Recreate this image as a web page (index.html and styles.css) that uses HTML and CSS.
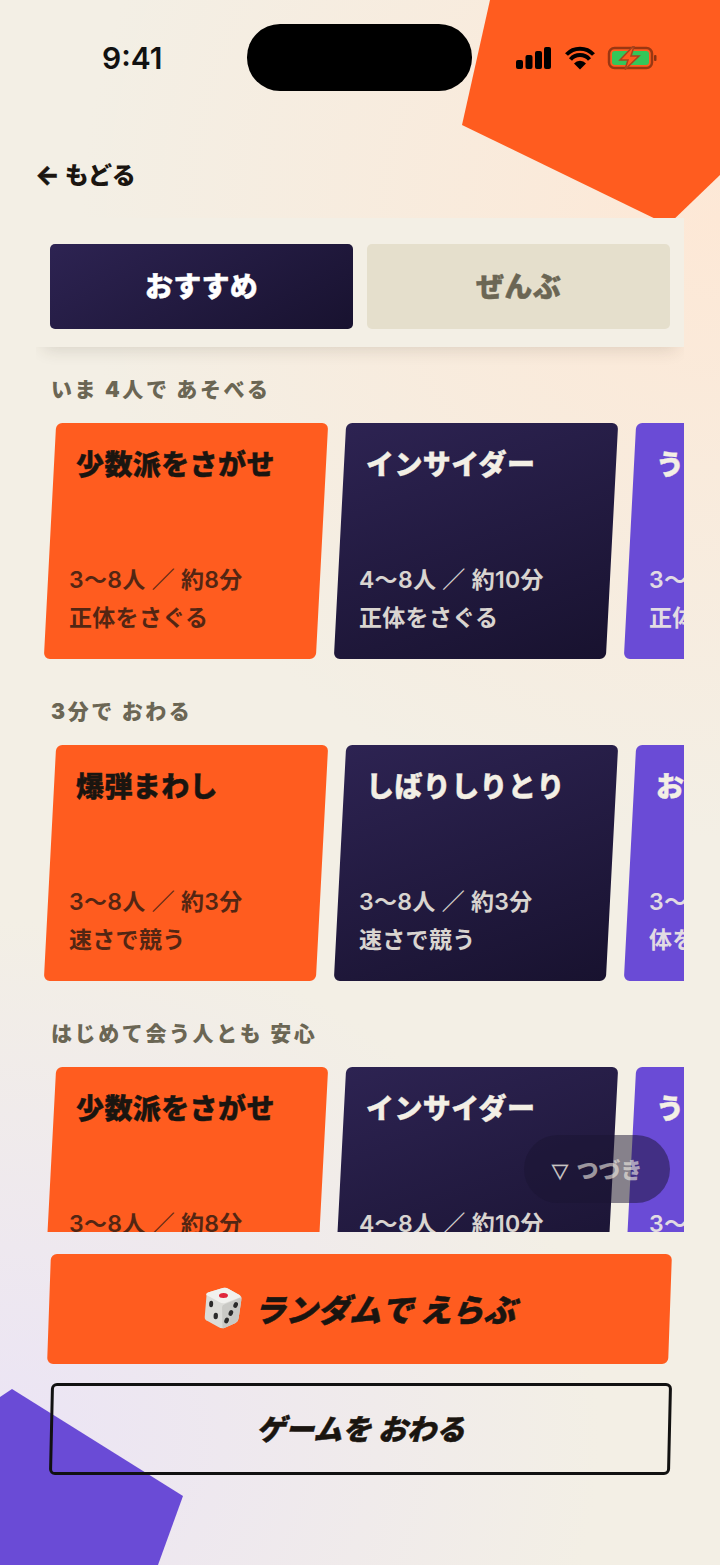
FILE: index.html
```html
<!DOCTYPE html>
<html lang="ja">
<head>
	<meta charset="UTF-8">
	<title>ゲームをえらぶ</title>
	<link rel="stylesheet" href="styles.css">
</head>
<body>
	<div class="screen">
		<div class="shape-orange"></div>
		<div class="shape-purple"></div>

		<div class="status">
			<span class="clock">9:41</span>
			<div class="island"></div>
			<svg class="status-icons" width="142" height="24" viewBox="0 0 142 24">
				<rect x="1" y="14" width="7" height="9" rx="2"/>
				<rect x="10.500" y="9" width="7" height="14" rx="2"/>
				<rect x="20" y="5" width="7" height="18" rx="2"/>
				<rect x="29" y="1" width="7" height="22" rx="2"/>
				<path d="M51.500 8.500a18.500 18.500 0 0 1 27 0M55.500 13.500a12.500 12.500 0 0 1 19 0" fill="none" stroke="#000" stroke-width="4"/>
				<path d="M59 17.500a8 8 0 0 1 12 0L65 23.500z"/>
				<rect x="94" y="2" width="43" height="20" rx="5.500" fill="none" stroke="#000" stroke-opacity=".4" stroke-width="2.500"/>
				<rect x="97" y="5" width="37" height="14" rx="3" fill="#34c759"/>
				<rect x="139" y="9" width="2.500" height="6" rx="1" fill="#000" fill-opacity=".45"/>
				<path d="M118 .5L105 14h8l-3 9.500L124 10h-8l3-9.500z" fill="#ff5c1f" stroke="#a8431c" stroke-width="1.500"/>
			</svg>
		</div>

		<div class="back"><span class="back-arrow">←</span> もどる</div>

		<div class="main">
			<div class="tabs">
				<div class="tab tab-on">おすすめ</div>
				<div class="tab">ぜんぶ</div>
			</div>

			<div class="section">
				<div class="label">いま 4人で あそべる</div>
				<div class="row">
					<div class="card orange">
						<div class="title">少数派をさがせ</div>
						<div class="meta">3〜8人 ／ 約8分<br>正体をさぐる</div>
					</div>
					<div class="card navy">
						<div class="title">インサイダー</div>
						<div class="meta">4〜8人 ／ 約10分<br>正体をさぐる</div>
					</div>
					<div class="card purple">
						<div class="title">うそつき村</div>
						<div class="meta">3〜8人 ／ 約5分<br>正体をさぐる</div>
					</div>
				</div>
			</div>

			<div class="section">
				<div class="label">3分で おわる</div>
				<div class="row">
					<div class="card orange">
						<div class="title">爆弾まわし</div>
						<div class="meta">3〜8人 ／ 約3分<br>速さで競う</div>
					</div>
					<div class="card navy">
						<div class="title">しばりしりとり</div>
						<div class="meta">3〜8人 ／ 約3分<br>速さで競う</div>
					</div>
					<div class="card purple">
						<div class="title">おえかき</div>
						<div class="meta">3〜8人 ／ 約3分<br>体をうごかす</div>
					</div>
				</div>
			</div>

			<div class="section">
				<div class="label">はじめて会う人とも 安心</div>
				<div class="row">
					<div class="card orange">
						<div class="title">少数派をさがせ</div>
						<div class="meta">3〜8人 ／ 約8分<br>正体をさぐる</div>
					</div>
					<div class="card navy">
						<div class="title">インサイダー</div>
						<div class="meta">4〜8人 ／ 約10分<br>正体をさぐる</div>
					</div>
					<div class="card purple">
						<div class="title">うそつき村</div>
						<div class="meta">3〜8人 ／ 約5分<br>正体をさぐる</div>
					</div>
				</div>
			</div>

			<div class="more"><span class="more-mark">▽</span>つづき</div>
		</div>

		<div class="actions">
			<div class="btn btn-main">
				<div class="btn-text">
					<svg class="dice" width="42" height="42" viewBox="0 0 42 42">
						<path d="M5 9Q4 6 8 5L21 1Q24 0 27 2L38 8Q41 10 40 13L38 31Q38 34 35 36L24 41Q21 42 18 40L7 34Q4 33 4 30z" fill="#dcdcd8"/>
						<path d="M5 8Q4 6 8 5L21 1Q24 0 27 2L38 8Q40 10 37 11L24 16Q21 17 18 15z" fill="#f1f1ee"/>
						<path d="M24 17L38 11Q40 11 40 13L38 31Q38 34 35 36L24 41Q22 42 22 39L21 20Q21 18 24 17z" fill="#c9c9c5"/>
						<ellipse cx="22" cy="8.500" rx="4.500" ry="2.500" fill="#e0263c"/>
						<ellipse cx="10" cy="17" rx="2" ry="3.200" fill="#2b2b2b"/>
						<ellipse cx="15" cy="29" rx="2.200" ry="3.200" fill="#2b2b2b"/>
						<ellipse cx="34.500" cy="18" rx="2.200" ry="3" fill="#2b2b2b" transform="rotate(20 34.500 18)"/>
						<ellipse cx="30" cy="26" rx="2.200" ry="3" fill="#2b2b2b" transform="rotate(20 30 26)"/>
						<ellipse cx="26" cy="33.500" rx="2.200" ry="3" fill="#2b2b2b" transform="rotate(20 26 33.500)"/>
					</svg>
					<span class="slant big">ランダムで えらぶ</span>
				</div>
			</div>
			<div class="btn btn-line">
				<span class="slant small">ゲームを おわる</span>
			</div>
		</div>
	</div>
</body>
</html>
```

FILE: styles.css
```css
*{
	margin: 0;
	padding: 0;
	box-sizing: border-box;
}
body{
	width: 720px;
	height: 1565px;
	overflow: hidden;
	font-family: "Noto Sans CJK JP", "Noto Sans", sans-serif;
	color: #1a1510;
}
.screen{
	position: relative;
	width: 720px;
	height: 1565px;
	overflow: hidden;
	background:
		radial-gradient(ellipse 640px 620px at 100% 14%, #fde8d6 0%, rgba(253,232,214,0) 100%),
		radial-gradient(ellipse 600px 520px at 0% 92%, #ebe4f5 0%, rgba(235,228,245,0) 100%),
		#f3efe5;
}

/* background shapes */
.shape-orange{
	position: absolute;
	top: 0;
	right: 0;
	width: 258px;
	height: 240px;
	background: #ff5c1f;
	clip-path: polygon(28px 0, 258px 0, 258px 175px, 206px 225px, 0 125px);
}
.shape-purple{
	position: absolute;
	left: 0;
	bottom: 0;
	width: 183px;
	height: 176px;
	background: #6a4bd6;
	clip-path: polygon(0 8px, 12px 0, 183px 107px, 158px 176px, 0 176px);
}

/* status bar */
.status{
	position: relative;
	height: 116px;
	padding-top: 24px;
	display: flex;
}
.clock{
	width: 247px;
	padding-left: 102px;
	font-family: Inter, sans-serif;
	font-size: 30px;
	font-weight: 600;
	line-height: 68px;
	color: #111;
}
.island{
	width: 225px;
	height: 67px;
	background: #000;
	border-radius: 33px;
}
.status-icons{
	margin: 22px 0 0 43px;
}

.back{
	position: relative;
	height: 102px;
	padding: 41px 0 0 35px;
	font-size: 24px;
	font-weight: 800;
	line-height: 34px;
	letter-spacing: -.3px;
}
.back-arrow{
	font-family: Inter, sans-serif;
	font-size: 26px;
	font-weight: 800;
	line-height: 26px;
	-webkit-text-stroke: .5px currentColor;
}

/* scrolling column */
.main{
	position: relative;
	width: 648px;
	height: 1014px;
	margin-left: 36px;
	overflow: hidden;
}
.tabs{
	position: relative;
	z-index: 2;
	display: flex;
	gap: 14px;
	padding: 26px 14px 18px;
	background: #f3efe5;
	box-shadow: 0 10px 16px -8px rgba(60,50,30,.16);
}
.tab{
	flex: 1;
	height: 85px;
	background: #e5dfcc;
	border-radius: 5px;
	color: #6b6654;
	font-size: 28px;
	font-weight: 900;
	line-height: 83px;
	letter-spacing: .3px;
	text-align: center;
	-webkit-text-stroke: .4px currentColor;
}
.tab-on{
	background: linear-gradient(150deg, #2d2352, #18122f);
	color: #fff;
}

.section{
	padding-top: 28px;
	padding-bottom: 38px;
}
.section + .section{
	padding-top: 0;
}
.label{
	height: 28px;
	margin: 0 0 20px 15px;
	color: #6b6654;
	font-family: Inter, "Noto Sans CJK JP", sans-serif;
	font-size: 21px;
	font-weight: 900;
	line-height: 30px;
	letter-spacing: 2.600px;
}
.row{
	display: flex;
	gap: 18px;
	padding-left: 14px;
	overflow: hidden;
}
.card{
	position: relative;
	flex: none;
	width: 272px;
	height: 236px;
	display: flex;
	flex-direction: column;
	justify-content: space-between;
	padding: 20px 10px 22px 19px;
	white-space: nowrap;
}
.card::before{
	content: "";
	position: absolute;
	top: 0;
	left: 0;
	width: 100%;
	height: 100%;
	border-radius: 6px;
	transform: skewX(-3deg);
}
.orange::before{
	background: #ff5c1f;
}
.navy::before{
	background: linear-gradient(160deg, #2d2352, #18122f);
}
.purple::before{
	background: #6a4bd6;
}
.title{
	position: relative;
	margin-left: 7px;
	font-size: 28px;
	font-weight: 900;
	line-height: 40px;
	letter-spacing: .4px;
	-webkit-text-stroke: .4px currentColor;
}
.meta{
	position: relative;
	font-family: Inter, "Noto Sans CJK JP", sans-serif;
	font-size: 23px;
	font-weight: 600;
	line-height: 38px;
	letter-spacing: .3px;
	opacity: .75;
}
.navy,
.purple{
	color: #f3efe5;
}
.navy .meta,
.purple .meta{
	opacity: .88;
}

.more{
	position: absolute;
	z-index: 3;
	top: 917px;
	right: 14px;
	width: 146px;
	height: 68px;
	background: rgba(26,20,50,.5);
	border-radius: 34px;
	color: rgba(243,239,229,.6);
	font-size: 22px;
	font-weight: 800;
	line-height: 66px;
	text-align: center;
}
.more-mark{
	margin-right: 8px;
	font-size: 17px;
	font-weight: 900;
	-webkit-text-stroke: .8px currentColor;
}

/* bottom buttons */
.actions{
	position: relative;
	padding: 22px 50px 0 49px;
}
.btn{
	display: flex;
	align-items: center;
	justify-content: center;
	border-radius: 6px;
}
.btn-main{
	height: 110px;
	background: #ff5c1f;
	transform: skewX(-2deg);
}
.btn-line{
	height: 92px;
	margin: 19px -1px 0 1px;
	padding-bottom: 4px;
	border: 3px solid #111;
	transform: skewX(-1.300deg);
}
.btn-text{
	display: flex;
	align-items: center;
	gap: 11px;
	padding: 0 3px 2px 0;
}
.slant{
	font-weight: 900;
	font-style: italic;
	color: #1a1510;
	-webkit-text-stroke: .5px currentColor;
}
.big{
	font-size: 32px;
	letter-spacing: -.2px;
}
.small{
	font-size: 29px;
	line-height: 40px;
}
```
